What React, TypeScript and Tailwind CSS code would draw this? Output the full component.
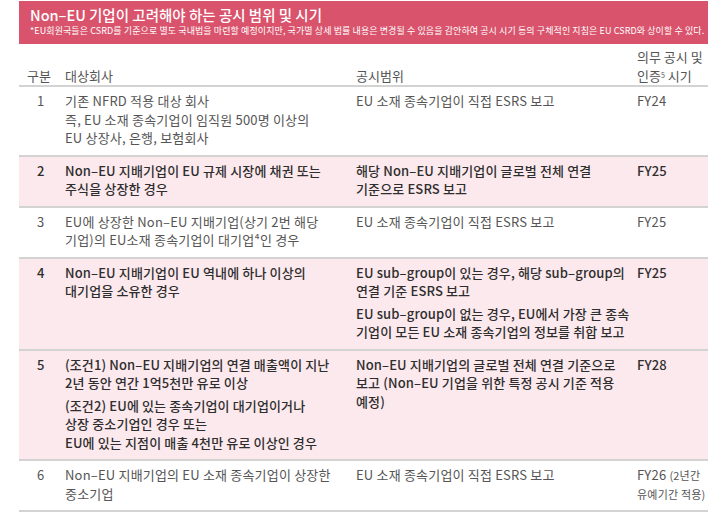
import React from 'react';

type Row = {
  no: string;
  target: string[][];
  scope: string[][];
  when: React.ReactNode;
  pink?: boolean;
};

const ROWS: Row[] = [
  {
    no: '1',
    target: [['기존 NFRD 적용 대상 회사', '즉, EU 소재 종속기업이 임직원 500명 이상의', 'EU 상장사, 은행, 보험회사']],
    scope: [['EU 소재 종속기업이 직접 ESRS 보고']],
    when: 'FY24',
  },
  {
    no: '2',
    target: [['Non–EU 지배기업이 EU 규제 시장에 채권 또는', '주식을 상장한 경우']],
    scope: [['해당 Non–EU 지배기업이 글로벌 전체 연결', '기준으로 ESRS 보고']],
    when: 'FY25',
    pink: true,
  },
  {
    no: '3',
    target: [['EU에 상장한 Non–EU 지배기업(상기 2번 해당', '기업)의 EU소재 종속기업이 대기업⁴인 경우']],
    scope: [['EU 소재 종속기업이 직접 ESRS 보고']],
    when: 'FY25',
  },
  {
    no: '4',
    target: [['Non–EU 지배기업이 EU 역내에 하나 이상의', '대기업을 소유한 경우']],
    scope: [
      ['EU sub–group이 있는 경우, 해당 sub–group의', '연결 기준 ESRS 보고'],
      ['EU sub–group이 없는 경우, EU에서 가장 큰 종속', '기업이 모든 EU 소재 종속기업의 정보를 취합 보고'],
    ],
    when: 'FY25',
    pink: true,
  },
  {
    no: '5',
    target: [
      ['(조건1) Non–EU 지배기업의 연결 매출액이 지난', '2년 동안 연간 1억5천만 유로 이상'],
      ['(조건2) EU에 있는 종속기업이 대기업이거나', '상장 중소기업인 경우 또는', 'EU에 있는 지점이 매출 4천만 유로 이상인 경우'],
    ],
    scope: [['Non–EU 지배기업의 글로벌 전체 연결 기준으로', '보고 (Non–EU 기업을 위한 특정 공시 기준 적용', '예정)']],
    when: 'FY28',
    pink: true,
  },
  {
    no: '6',
    target: [['Non–EU 지배기업의 EU 소재 종속기업이 상장한', '중소기업']],
    scope: [['EU 소재 종속기업이 직접 ESRS 보고']],
    when: (
      <>
        FY26 <span className="text-[11px]">(2년간</span>
        <br />
        <span className="text-[11px]">유예기간 적용)</span>
      </>
    ),
  },
];

const Paras = ({ paras }: { paras: string[][] }) => (
  <div className="flex flex-col gap-[4px]">
    {paras.map((p, i) => (
      <div key={i}>
        {p.map((line, j) => (
          <div key={j} className="whitespace-nowrap">{line}</div>
        ))}
      </div>
    ))}
  </div>
);

export default function App() {
  return (
    <div
      className="w-[719px] h-[525px] bg-white overflow-hidden"
      style={{ fontFamily: '"Noto Sans CJK KR", "Noto Sans", sans-serif' }}
    >
      <div className="ml-[19px] pt-[1px] w-[689px]">
        {/* Banner */}
        <div className="h-[43px] bg-[#d9536c] pl-[11px] pt-[4px] text-white">
          <div className="text-[14.5px] leading-[19px] font-medium">
            Non–EU 기업이 고려해야 하는 공시 범위 및 시기
          </div>
          <div className="text-[9px] leading-[13px] tracking-[0.01em] whitespace-nowrap">
            *EU회원국들은 CSRD를 기준으로 별도 국내법을 마련할 예정이지만, 국가별 상세 법률 내용은 변경될 수 있음을 감안하여 공시 시기 등의 구체적인 지침은 EU CSRD와 상이할 수 있다.
          </div>
        </div>

        {/* Header */}
        <div className="grid grid-cols-[46px_291px_281px_1fr] h-[43px] items-end border-b-2 border-[#d3d3d3] text-[13px] leading-[19px] text-[#555]">
          <div className="pl-[8px]">구분</div>
          <div>대상회사</div>
          <div>공시범위</div>
          <div>
            의무 공시 및
            <br />
            인증<sup className="text-[7px]">5</sup> 시기
          </div>
        </div>

        {/* Rows */}
        {ROWS.map((r) => (
          <div
            key={r.no}
            className={
              r.pink
                ? 'grid grid-cols-[46px_291px_281px_1fr] pt-[5px] pb-[7px] border-b-2 border-[#d3d3d3] bg-[#fce9ed] text-[13px] leading-[18.5px] tracking-[0.01em] text-[#2e2e2e] font-medium'
                : 'grid grid-cols-[46px_291px_281px_1fr] pt-[5px] pb-[7px] border-b-2 border-[#d3d3d3] bg-white text-[13px] leading-[18.5px] tracking-[0.015em] text-[#555]'
            }
          >
            <div className="pl-[18px]">{r.no}</div>
            <Paras paras={r.target} />
            <Paras paras={r.scope} />
            <div className="whitespace-nowrap">{r.when}</div>
          </div>
        ))}
      </div>
    </div>
  );
}
